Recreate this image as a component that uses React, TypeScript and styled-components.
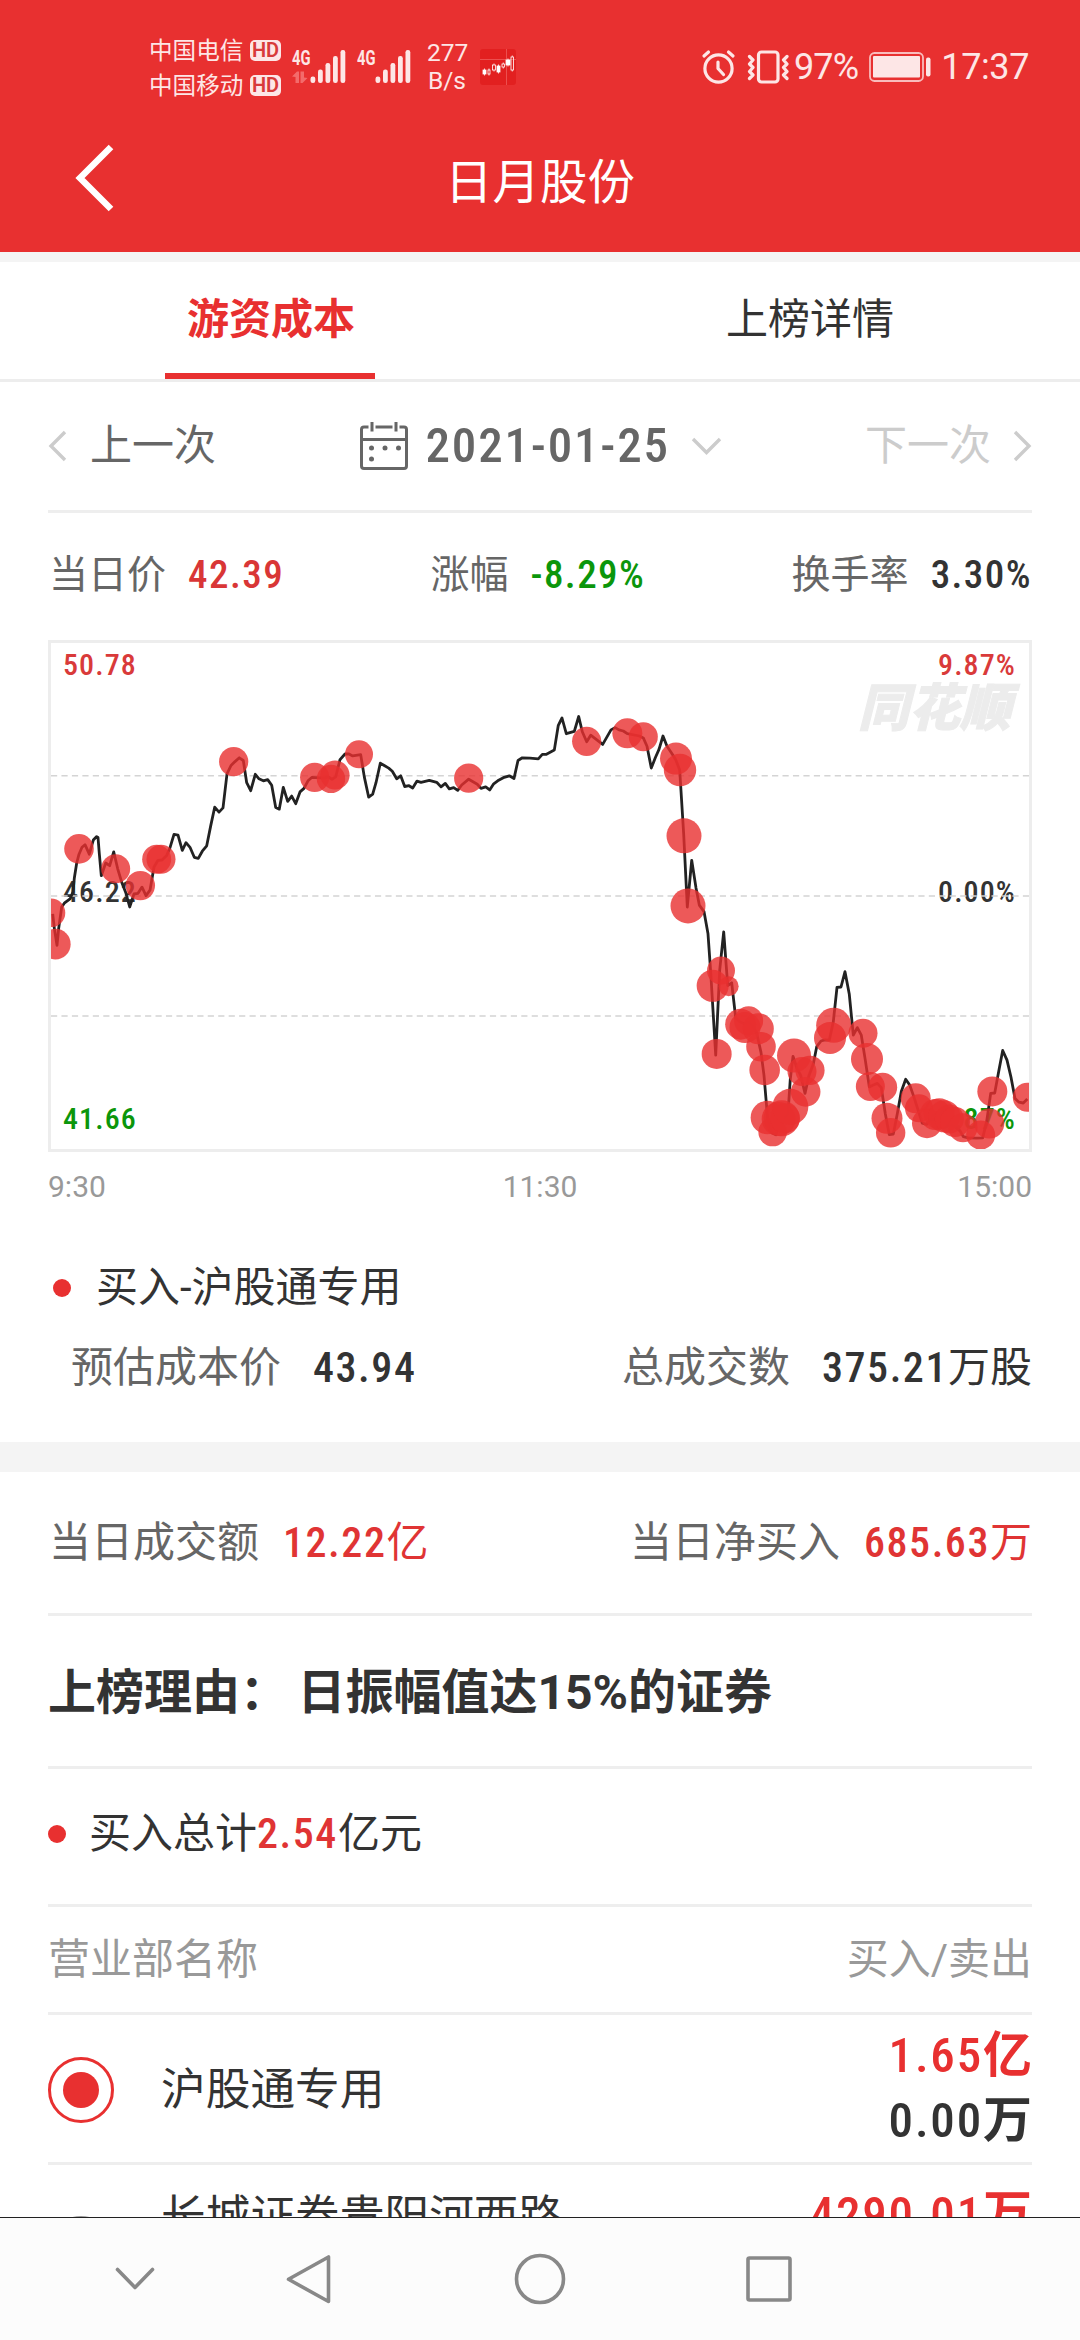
import React from "react";
import styled, { createGlobalStyle } from "styled-components";

const RED = "#e83030";

const GlobalStyle = createGlobalStyle`
  *, *::before, *::after { box-sizing: border-box; }
  body {
    margin: 0;
    background: #fff;
    font-family: Roboto, "Noto Sans CJK SC", sans-serif;
    color: #333;
  }
  svg { display: block; flex: none; overflow: visible; }
`;

const Screen = styled.div`
  display: flex;
  flex-direction: column;
  width: 1080px;
  height: 2340px;
  overflow: hidden;
  background: #fff;
`;

/* ---------- header ---------- */

const Header = styled.header`
  flex: none;
  height: 252px;
  background: ${RED};
  color: #fff;
`;

const StatusBar = styled.div`
  display: flex;
  justify-content: space-between;
  height: 134px;
  padding: 0 51px 0 149px;
  color: #fde6e6;
`;

const StatusGroup = styled.div`
  display: flex;
  align-items: center;
`;

const Carriers = styled.div`
  display: flex;
  flex-direction: column;
  width: 143px;
  padding-top: 3px;
`;

const Carrier = styled.div`
  display: flex;
  align-items: center;
  justify-content: space-between;
  width: 132px;
  height: 35px;
  font-size: 23.6px;
  line-height: 35px;
  white-space: nowrap;
`;

const HdBadge = styled.span`
  width: 31px;
  height: 21px;
  margin-bottom: 2px;
  border-radius: 5px;
  background: #fde6e6;
  color: #d83a3a;
  font-size: 20px;
  font-weight: 600;
  line-height: 21px;
  text-align: center;
`;

const Speed = styled.div`
  width: 40px;
  margin: 0 13px 0 5px;
  font-size: 24.5px;
  line-height: 28px;
  text-align: center;
`;

const StatusText = styled.span<{ $left: number; $spacing?: number }>`
  margin-left: ${(p) => p.$left}px;
  font-size: 36px;
  line-height: 40px;
  letter-spacing: ${(p) => p.$spacing ?? 0}px;
`;

const TitleBar = styled.div`
  display: grid;
  grid-template-columns: 200px 1fr 200px;
  align-items: center;
  height: 98px;
`;

const BackButton = styled.button`
  display: flex;
  padding: 0 0 10px 73px;
  border: 0;
  background: none;
`;

const Title = styled.h1`
  margin: 0;
  font-size: 47.5px;
  font-weight: 400;
  line-height: 60px;
  text-align: center;
`;

/* ---------- tabs ---------- */

const Band = styled.div<{ $height: number }>`
  flex: none;
  height: ${(p) => p.$height}px;
  background: #f4f4f4;
`;

const Tabs = styled.nav`
  display: grid;
  flex: none;
  grid-template-columns: 1fr 1fr;
  height: 120px;
  border-bottom: 3px solid #ededed;
`;

const Tab = styled.button<{ $active?: boolean }>`
  justify-self: center;
  width: 210px;
  height: 117px;
  padding: ${(p) => (p.$active ? "5px 0 0 2px" : "0 0 1px")};
  border: 0;
  border-bottom: ${(p) => (p.$active ? `6px solid ${RED}` : "0")};
  background: none;
  color: ${(p) => (p.$active ? RED : "#333")};
  font-family: inherit;
  font-size: 42px;
  font-weight: ${(p) => (p.$active ? 700 : 400)};
  line-height: 60px;
`;

/* ---------- content ---------- */

const Content = styled.main`
  flex: 1;
  min-height: 0;
  overflow: hidden;
`;

const Section = styled.section`
  padding: 0 48px;
`;

const Row = styled.div<{ $height: number; $line?: boolean; $up?: number; $down?: number }>`
  display: flex;
  align-items: center;
  justify-content: space-between;
  box-sizing: content-box;
  height: ${(p) => p.$height - (p.$up ?? 0) - (p.$down ?? 0)}px;
  padding: ${(p) => p.$down ?? 0}px 0 ${(p) => p.$up ?? 0}px;
  border-bottom: ${(p) => (p.$line ? "3px solid #eee" : "0")};
  white-space: nowrap;
`;

const DateStep = styled.div<{ $disabled?: boolean }>`
  display: flex;
  align-items: center;
  gap: ${(p) => (p.$disabled ? 21 : 22)}px;
  color: ${(p) => (p.$disabled ? "#ccc" : "#666")};
  font-size: 42px;
  line-height: 60px;
`;

const DatePicker = styled.div`
  display: flex;
  align-items: center;
  width: 362px;
  color: #666;
`;

const Digits = styled.span`
  font-family: "Roboto Condensed", Roboto, sans-serif;
  font-stretch: 88%;
  font-weight: 500;
  letter-spacing: 0.037em;
`;

const DateText = styled(Digits)`
  width: 265px;
  margin-left: 18px;
  font-size: 49px;
  line-height: 60px;
`;

const Pair = styled.div<{ $gap: number; $size?: number; $indent?: number }>`
  display: flex;
  align-items: baseline;
  gap: ${(p) => p.$gap}px;
  margin-left: ${(p) => p.$indent ?? 0}px;
  font-size: ${(p) => p.$size ?? 42}px;
  line-height: 60px;
`;

const Label = styled.span`
  color: #666;
`;

const Value = styled.span<{ $tone?: string }>`
  color: ${(p) => p.$tone ?? "#333"};
`;

/* ---------- chart ---------- */

const ChartBox = styled.div`
  position: relative;
  height: 512px;
  border: 3px solid #ededed;
`;

const ScaleLabels = styled.div`
  display: flex;
  justify-content: space-between;
  height: 100%;
  padding: 4px 13px 12px 12px;
`;

const ScaleColumn = styled.div`
  display: flex;
  flex-direction: column;
  justify-content: space-between;
  text-align: right;
`;

const ScaleLabel = styled(Digits)<{ $tone: string }>`
  color: ${(p) => p.$tone};
  font-size: 30px;
  line-height: 36px;
`;

const Watermark = styled.span`
  position: absolute;
  top: 34px;
  right: 18px;
  color: #ececec;
  font-size: 51px;
  font-style: italic;
  font-weight: 900;
  line-height: 64px;
  -webkit-text-stroke: 1px #ececec;
`;

const Plot = styled.svg`
  position: absolute;
  inset: 0;
`;

const Axis = styled.div`
  display: grid;
  grid-template-columns: 1fr 1fr 1fr;
  height: 70px;
  color: #999;
  font-size: 30px;
  line-height: 70px;
`;

const AxisTime = styled.span<{ $align: string }>`
  text-align: ${(p) => p.$align};
`;

const Legend = styled.div`
  display: flex;
  align-items: center;
  height: 81px;
  margin-top: 25px;
  padding-left: 5px;
  font-size: 42px;
  line-height: 60px;
`;

const Bullet = styled.i<{ $gap: number }>`
  width: 18px;
  height: 18px;
  margin-right: ${(p) => p.$gap}px;
  border-radius: 50%;
  background: ${RED};
`;

/* ---------- table ---------- */

const Reason = styled.h2`
  margin: 0;
  font-size: 48px;
  font-weight: 700;
  line-height: 70px;
  word-spacing: -2.5px;
`;

const Summary = styled.div`
  display: flex;
  align-items: center;
  font-size: 42px;
  line-height: 60px;
`;

const HeadCell = styled.span`
  color: #999;
  font-size: 42px;
  line-height: 60px;
`;

const Broker = styled.div`
  display: flex;
  align-items: center;
  gap: 47px;
  font-size: 44.7px;
  line-height: 63px;
`;

const BrokerName = styled.span<{ $raise?: number }>`
  padding-bottom: ${(p) => p.$raise ?? 0}px;
`;

const Radio = styled.span<{ $on?: boolean }>`
  display: grid;
  place-items: center;
  width: 66px;
  height: 66px;
  border: 3px solid ${(p) => (p.$on ? RED : "#999")};
  border-radius: 50%;
  &::after {
    content: "";
    width: 36px;
    height: 36px;
    border-radius: 50%;
    background: ${(p) => (p.$on ? RED : "transparent")};
  }
`;

const Amounts = styled.div`
  display: flex;
  flex-direction: column;
  align-items: flex-end;
  height: 130px;
  margin-bottom: 5px;
  font-size: 49px;
  font-weight: 700;
  line-height: 65px;
`;

const NavBar = styled.footer`
  display: flex;
  flex: none;
  height: 123px;
  border-top: 1px solid #222;
  background: #fcfcfc;
`;

/* ---------- icons ---------- */

const Chevron = ({ dir, color }: { dir: "left" | "right" | "down"; color: string }) => {
  const d = { left: "M17 2 3 16l14 14", right: "M3 2l14 14L3 30", down: "M2 2l13.5 13.5L29 2" }[dir];
  const down = dir === "down";
  return (
    <svg width={down ? 31 : 20} height={down ? 19 : 32} fill="none" stroke={color} strokeWidth="3.4">
      <path d={d} />
    </svg>
  );
};

const CalendarIcon = () => (
  <svg width="48" height="48" fill="none" stroke="#666" strokeWidth="3">
    <path d="M8.500 5H4Q1.500 5 1.500 7.500V44Q1.500 46.500 4 46.500H44Q46.500 46.500 46.500 44V7.500Q46.500 5 44 5H39.500M15.500 5H32.500M12 0V9.500M36 0V9.500M1.500 17.500H46.500" />
    <g fill="#666" stroke="none">
      <circle cx="11.500" cy="26" r="2.500" />
      <circle cx="25" cy="26" r="2.500" />
      <circle cx="38.500" cy="26" r="2.500" />
      <circle cx="11.500" cy="37" r="2.500" />
    </g>
  </svg>
);

const bars = [
  [18.5, 26.5],
  [26, 19.5],
  [33.5, 13],
  [41, 6],
  [48.5, 0],
];

const Signal = ({ arrows }: { arrows?: boolean }) => (
  <svg width="65" height="34" viewBox="0 0 65 34" fill="#fde6e6">
    <text x="0" y="15" fontFamily="Roboto" fontSize="21" fontWeight="700" textLength="18.500" lengthAdjust="spacingAndGlyphs">
      4G
    </text>
    {bars.map(([x, y]) => (
      <rect key={x} x={x} y={y} width="4.800" height={33 - y} rx="2.200" />
    ))}
    {arrows && (
      <g fill="#f36b6b">
        <path d="M0 26.500 5 21.500H7V33H3.500V27ZM15.500 28 10.500 33H8.500V21.500H12V27.500Z" />
      </g>
    )}
  </svg>
);

const candles = [
  [3, 21, 3, 4, 1],
  [8, 21, 2, 4, 0],
  [12.5, 16, 3, 5, 0],
  [17, 17, 3, 6, 1],
  [22, 15, 2.5, 3, 0],
  [26, 11, 4, 5, 1],
  [31, 8, 2.5, 13, 0],
];

const AppIcon = () => (
  <svg width="36" height="36">
    <rect width="36" height="36" rx="3" fill="#e22020" />
    <path d="M0 10.500H36M26.500 0V36" stroke="#f06464" strokeWidth=".7" />
    {candles.map(([x, y, w, h, full]) => (
      <g key={x} stroke="#fff" strokeWidth=".8">
        <path d={`M${x + w / 2} ${y - 1.5}V${y}M${x + w / 2} ${y + h}v1.5`} />
        <rect x={x} y={y} width={w} height={h} fill={full ? "#fff" : "none"} />
      </g>
    ))}
  </svg>
);

const AlarmIcon = () => (
  <svg width="34" height="34" fill="none" stroke="#fde6e6" strokeWidth="3.200" strokeLinecap="round" strokeLinejoin="round">
    <circle cx="16.500" cy="18.500" r="13.600" />
    <path d="M16 12V18.500L21.500 24.500M2 6 6.500 2M31 6 26.500 2" />
  </svg>
);

const VibrateIcon = () => (
  <svg width="44" height="34" fill="none" stroke="#fde6e6" strokeWidth="3.200" strokeLinecap="round" strokeLinejoin="round">
    <rect x="11.500" y="2" width="19.500" height="30" rx="3" />
    <path d="M2.500 6.500 6 10 2.500 14 6 17.500 2.500 21.500 6 25 2.500 28.500M40 6.500 36.500 10 40 14 36.500 17.500 40 21.500 36.500 25 40 28.500" />
  </svg>
);

const BatteryIcon = () => (
  <svg width="62" height="30" fill="none" stroke="#f9bcbc" strokeWidth="1.800">
    <rect x="1" y="1" width="53" height="28" rx="4.500" />
    <rect x="4" y="4" width="47" height="21.500" rx="1" fill="#fde6e6" stroke="none" />
    <rect x="57" y="5.500" width="4.500" height="19" rx="2" fill="#fde6e6" stroke="none" />
  </svg>
);

/* ---------- intraday data ---------- */

// Both series are recorded on the same grid: x runs 63..2997, y runs 60..1382.
const price =
  "68,768 73,805 81,850 86,805 95,750 103,740 121,728 129,710 133,675 140,635 147,612 156,594 165,587 178,612 190,575 200,566 204,568 208,610 214,668 227,635 239,642 251,606 263,650 275,685 287,712 299,750 312,716 324,714 336,698 348,720 360,706 372,645 384,628 396,627 410,615 420,595 432,560 444,562 457,602 468,582 480,594 493,620 505,623 517,604 530,590 542,538 554,489 567,502 579,491 591,402 603,380 615,370 628,360 640,367 650,425 662,446 676,403 687,415 700,420 713,417 725,432 737,490 748,494 760,437 773,474 785,460 797,480 810,449 822,440 834,420 846,411 882,413 895,410 906,416 917,410 930,365 945,350 957,350 968,355 992,352 1003,410 1016,463 " +
  "1028,455 1038,425 1051,374 1064,381 1076,387 1087,395 1100,415 1112,407 1124,435 1137,433 1148,439 1161,421 1173,424 1198,419 1220,424 1233,436 1246,427 1258,441 1271,438 1283,445 1295,431 1316,416 1342,429 1353,440 1367,436 1379,444 1391,428 1403,420 1420,412 1438,407 1452,414 1464,367 1477,360 1500,361 1525,363 1537,351 1548,351 1573,340 1585,275 1596,256 1609,297 1633,291 1646,252 1657,292 1670,318 1682,301 1718,325 1743,287 1755,281 1767,287 1780,290 1792,297 1828,303 1840,308 1851,330 1864,387 1876,360 1887,338 1899,303 1911,330 1925,348 1937,365 1949,392 1961,560 1972,750 1985,628 1998,700 2008,745 2022,762 2034,820 2042,920 2057,1137 " +
  "2069,915 2081,815 2093,955 2105,948 2117,1040 2130,1050 2142,1055 2155,1050 2167,1058 2180,1080 2193,1130 2202,1190 2213,1305 2225,1340 2238,1345 2250,1310 2263,1300 2274,1290 2281,1200 2289,1140 2300,1170 2312,1190 2325,1237 2337,1190 2350,1160 2360,1115 2373,1100 2385,1097 2398,1098 2410,1050 2421,960 2433,959 2445,919 2458,978 2470,1085 2482,1065 2494,1085 2506,1150 2518,1220 2530,1215 2542,1211 2554,1222 2566,1290 2578,1345 2590,1343 2602,1290 2614,1232 2627,1200 2639,1215 2651,1245 2664,1280 2677,1315 2690,1318 2702,1300 2715,1290 2728,1295 2740,1300 2752,1310 2765,1320 2777,1325 2790,1335 2800,1350 2815,1353 2840,1354 2858,1353 2870,1310 2882,1237 2894,1236 2906,1180 2918,1125 2931,1150 2943,1195 2955,1250 2967,1260 2980,1262 2992,1252";

const trades: [number, number, number][] = [
  [63, 765, 14.3], [76, 847, 15.3], [147, 598, 14.8], [257, 650, 14.5], [331, 694, 14.7],
  [380, 625, 14.5], [393, 625, 14.5], [611, 370, 14.6], [854, 411, 14.6], [903, 415, 14.2],
  [915, 405, 14.6], [987, 351, 14], [1316, 413, 14.6], [1670, 317, 14.6], [1792, 296, 15],
  [1840, 305, 14.5], [1938, 362, 16], [1950, 392, 16.2], [1962, 564, 17.5], [1974, 747, 17.5],
  [2048, 956, 16], [2073, 916, 14], [2096, 957, 10], [2060, 1134, 15], [2132, 1056, 15.5],
  [2145, 1065, 15.5], [2156, 1047, 14.5], [2185, 1068, 15.5], [2193, 1115, 14.8], [2204, 1176, 15.3],
  [2212, 1300, 16.7], [2228, 1338, 14.3], [2246, 1304, 17], [2255, 1302, 18], [2265, 1302, 15],
  [2281, 1272, 18], [2292, 1138, 17], [2316, 1180, 14.5], [2340, 1177, 14.6], [2327, 1233, 14.8],
  [2411, 1059, 17.5], [2400, 1092, 16], [2499, 1080, 14.5], [2511, 1147, 16], [2521, 1219, 14.5],
  [2558, 1221, 14.5], [2571, 1302, 15.5], [2582, 1340, 14.7], [2657, 1250, 15], [2667, 1276, 14],
  [2691, 1315, 15], [2716, 1292, 15.5], [2728, 1290, 15.5], [2743, 1297, 16], [2758, 1304, 14.5],
  [2775, 1312, 15], [2799, 1327, 14.5], [2852, 1346, 14.5], [2878, 1316, 15], [2887, 1232, 15],
  [2992, 1247, 14.5],
];

const px = (x: number) => (x - 63) / 3;
const py = (y: number) => (y - 60) / 2.6133;

const linePoints = price
  .split(" ")
  .map((p) => p.split(",").map(Number))
  .map(([x, y]) => `${px(x).toFixed(1)},${py(y).toFixed(1)}`)
  .join(" ");

const IntradayChart = () => (
  <ChartBox>
    <Watermark>同花顺</Watermark>
    <ScaleLabels>
      <ScaleColumn>
        <ScaleLabel $tone="#d93a3a">50.78</ScaleLabel>
        <ScaleLabel $tone="#333">46.22</ScaleLabel>
        <ScaleLabel $tone="#0b960b">41.66</ScaleLabel>
      </ScaleColumn>
      <ScaleColumn>
        <ScaleLabel $tone="#d93a3a">9.87%</ScaleLabel>
        <ScaleLabel $tone="#333">0.00%</ScaleLabel>
        <ScaleLabel $tone="#0b960b">-9.87%</ScaleLabel>
      </ScaleColumn>
    </ScaleLabels>
    <Plot width="978" height="506" style={{ overflow: "hidden" }}>
      <path d="M0 132.800H978M0 253H978M0 373H978" stroke="#d4d4d4" strokeWidth="1.600" strokeDasharray="6.200 4.250" />
      <polyline points={linePoints} fill="none" stroke="#222" strokeWidth="2.800" strokeLinejoin="round" />
      {trades.map(([x, y, r], i) => (
        <circle key={i} cx={px(x)} cy={py(y)} r={r} fill={RED} fillOpacity=".8" />
      ))}
    </Plot>
  </ChartBox>
);

export default function App() {
  return (
    <Screen>
      <GlobalStyle />
      <Header>
        <StatusBar>
          <StatusGroup>
            <Carriers>
              <Carrier>
                中国电信<HdBadge>HD</HdBadge>
              </Carrier>
              <Carrier>
                中国移动<HdBadge>HD</HdBadge>
              </Carrier>
            </Carriers>
            <Signal arrows />
            <Signal />
            <Speed>277 B/s</Speed>
            <AppIcon />
          </StatusGroup>
          <StatusGroup>
            <AlarmIcon />
            <StatusText $left={11} as="div">
              <VibrateIcon />
            </StatusText>
            <StatusText $left={3} $spacing={-0.8}>
              97%
            </StatusText>
            <StatusText $left={11} as="div">
              <BatteryIcon />
            </StatusText>
            <StatusText $left={10} $spacing={-0.4}>
              17:37
            </StatusText>
          </StatusGroup>
        </StatusBar>
        <TitleBar>
          <BackButton aria-label="返回">
            <svg width="44" height="68" fill="none" stroke="#fff" strokeWidth="6.500">
              <path d="M38 3 7 34 38 65" />
            </svg>
          </BackButton>
          <Title>日月股份</Title>
        </TitleBar>
      </Header>
      <Band $height={10} />
      <Tabs>
        <Tab $active>游资成本</Tab>
        <Tab>上榜详情</Tab>
      </Tabs>

      <Content>
        <Section>
          <Row $height={128} $line>
            <DateStep>
              <Chevron dir="left" color="#ccc" />
              上一次
            </DateStep>
            <DatePicker>
              <CalendarIcon />
              <DateText>2021-01-25</DateText>
              <Chevron dir="down" color="#ccc" />
            </DatePicker>
            <DateStep $disabled>
              下一次
              <Chevron dir="right" color="#ccc" />
            </DateStep>
          </Row>
          <Row $height={127} $up={4}>
            <Pair $gap={22} $size={39} $indent={1}>
              <Label>当日价</Label>
              <Value $tone="#d93636">
                <Digits>42.39</Digits>
              </Value>
            </Pair>
            <Pair $gap={22} $size={39}>
              <Label>涨幅</Label>
              <Value $tone="#0b960b">
                <Digits>-8.29%</Digits>
              </Value>
            </Pair>
            <Pair $gap={22} $size={39}>
              <Label>换手率</Label>
              <Value>
                <Digits>3.30%</Digits>
              </Value>
            </Pair>
          </Row>
          <IntradayChart />
          <Axis>
            <AxisTime $align="left">9:30</AxisTime>
            <AxisTime $align="center">11:30</AxisTime>
            <AxisTime $align="right">15:00</AxisTime>
          </Axis>
          <Legend>
            <Bullet $gap={25} />
            买入-沪股通专用
          </Legend>
          <Row $height={80}>
            <Pair $gap={32} $indent={23}>
              <Label>预估成本价</Label>
              <Value>
                <Digits>43.94</Digits>
              </Value>
            </Pair>
            <Pair $gap={32}>
              <Label>总成交数</Label>
              <Value>
                <Digits>375.21</Digits>万股
              </Value>
            </Pair>
          </Row>
        </Section>
        <Row $height={34} />
        <Band $height={30} />
        <Section>
          <Row $height={141} $line>
            <Pair $gap={24} $indent={1}>
              <Label>当日成交额</Label>
              <Value $tone="#e03434">
                <Digits>12.22</Digits>亿
              </Value>
            </Pair>
            <Pair $gap={24}>
              <Label>当日净买入</Label>
              <Value $tone="#e03434">
                <Digits>685.63</Digits>万
              </Value>
            </Pair>
          </Row>
          <Row $height={150} $line $down={4}>
            <Reason>上榜理由： 日振幅值达15%的证券</Reason>
          </Row>
          <Row $height={135} $line $up={5}>
            <Summary>
              <Bullet $gap={23} />
              <span>
                买入总计
                <Value $tone="#e03434">
                  <Digits>2.54</Digits>
                </Value>
                亿元
              </span>
            </Summary>
          </Row>
          <Row $height={105} $line>
            <HeadCell>营业部名称</HeadCell>
            <HeadCell>买入/卖出</HeadCell>
          </Row>
          <Row $height={147} $line $down={3}>
            <Broker>
              <Radio $on />
              <BrokerName>沪股通专用</BrokerName>
            </Broker>
            <Amounts>
              <Value $tone={RED}>
                <Digits>1.65</Digits>亿
              </Value>
              <Value>
                <Digits>0.00</Digits>万
              </Value>
            </Amounts>
          </Row>
          <Row $height={166} $down={2}>
            <Broker>
              <Radio />
              <BrokerName $raise={63}>长城证券贵阳河西路</BrokerName>
            </Broker>
            <Amounts>
              <Value $tone={RED}>
                <Digits>4290.01</Digits>万
              </Value>
            </Amounts>
          </Row>
        </Section>
      </Content>

      <NavBar>
        <svg width="1080" height="122" viewBox="0 2218 1080 122" fill="none" stroke="#888" strokeWidth="3.600" strokeLinejoin="round" strokeLinecap="round">
          <path d="M117.500 2269.500 135 2287.500 152.500 2269.500" />
          <path d="M328.500 2257V2301.500L288.500 2279.300Z" />
          <circle cx="540" cy="2279" r="23.500" />
          <rect x="748" y="2258" width="42" height="42" rx="1.500" />
        </svg>
      </NavBar>
    </Screen>
  );
}
